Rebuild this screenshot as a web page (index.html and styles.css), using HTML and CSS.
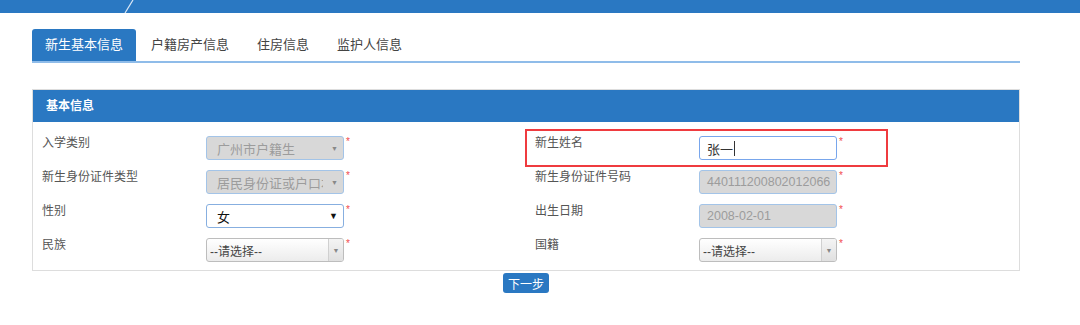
FILE: index.html
```html
<!DOCTYPE html>
<html lang="zh-CN">
<head>
  <meta charset="UTF-8">
  <title>新生信息登记</title>
  <link rel="stylesheet" href="styles.css">
</head>
<body>
  <!-- barra superiore -->
  <div class="topbar">
    <svg class="slash" width="10" height="13" viewBox="0 0 10 13">
      <line x1="1" y1="13" x2="9" y2="0" stroke="#dbe8f6" stroke-width="1.2"/>
    </svg>
  </div>

  <div class="wrap">
    <div class="tabs">
      <div class="tab active">新生基本信息</div>
      <div class="tab">户籍房产信息</div>
      <div class="tab">住房信息</div>
      <div class="tab">监护人信息</div>
    </div>

    <div class="panel">
      <div class="panel-head">基本信息</div>
      <div class="panel-body">
        <div class="row">
          <span class="label">入学类别</span>
          <div class="ctrl sel-disabled"><span class="val">广州市户籍生</span><span class="arrow">▼</span></div>
          <span class="req">*</span>
        </div>
        <div class="row">
          <span class="label">新生姓名</span>
          <div class="ctrl field focus">张一<span class="caret"></span></div>
          <span class="req">*</span>
          <div class="mark"></div>
        </div>

        <div class="row">
          <span class="label">新生身份证件类型</span>
          <div class="ctrl sel-disabled"><span class="val">居民身份证或户口本</span><span class="arrow">▼</span></div>
          <span class="req">*</span>
        </div>
        <div class="row">
          <span class="label">新生身份证件号码</span>
          <div class="ctrl field disabled">440111200802012066</div>
          <span class="req">*</span>
        </div>

        <div class="row">
          <span class="label">性别</span>
          <div class="ctrl sel-native"><span class="val">女</span><span class="arrow">▼</span></div>
          <span class="req">*</span>
        </div>
        <div class="row">
          <span class="label">出生日期</span>
          <div class="ctrl field disabled">2008-02-01</div>
          <span class="req">*</span>
        </div>

        <div class="row">
          <span class="label">民族</span>
          <div class="ctrl sel-chosen"><span class="val">--请选择--</span><span class="drop"><span class="arrow">▼</span></span></div>
          <span class="req">*</span>
        </div>
        <div class="row">
          <span class="label">国籍</span>
          <div class="ctrl sel-chosen"><span class="val">--请选择--</span><span class="drop"><span class="arrow">▼</span></span></div>
          <span class="req">*</span>
        </div>
      </div>
    </div>

    <button class="next">下一步</button>
  </div>
</body>
</html>
```

FILE: styles.css
```css
body {
  margin: 0;
  font-family: "Liberation Sans", "Noto Sans CJK SC", sans-serif;
  background-color: #ffffff;
  color: #555555;
}

.topbar {
  height: 13px;
  background-color: #2a78c2;
  display: flex;
}

.slash {
  margin-left: 124px;
}

.wrap {
  width: 988px;
  margin: 16px 0 0 32px;
  display: flex;
  flex-direction: column;
}

/* schede */
.tabs {
  display: flex;
  border-bottom: 2px solid #8fbce9;
}

.tab {
  padding: 0 13px;
  margin-right: 2px;
  line-height: 32px;
  font-size: 13px;
  color: #444444;
}

.tab.active {
  background-color: #2a78c2;
  color: #ffffff;
  border-radius: 3px 3px 0 0;
}

/* pannello */
.panel {
  margin-top: 26px;
  border: 1px solid #dddddd;
}

.panel-head {
  height: 32px;
  line-height: 32px;
  padding-left: 13px;
  background-color: #2a78c2;
  color: #ffffff;
  font-size: 12px;
  font-weight: bold;
}

.panel-body {
  display: grid;
  grid-template-columns: 1fr 1fr;
  padding: 8px 0 4px;
}

.row {
  position: relative;
  display: flex;
  height: 34px;
  padding-left: 9px;
}

.label {
  width: 164px;
  padding-top: 5px;
  line-height: 16px;
  font-size: 12px;
  color: #555555;
}

.ctrl {
  box-sizing: border-box;
  width: 138px;
  height: 24px;
  margin-top: 6px;
  border-radius: 3px;
  display: flex;
  align-items: center;
  font-size: 12.5px;
  overflow: hidden;
  white-space: nowrap;
}

.ctrl .val {
  flex: 1;
  min-width: 0;
  overflow: hidden;
  text-overflow: clip;
}

.arrow {
  font-size: 7px;
  color: #888888;
}

.req {
  margin: 7px 0 0 2px;
  font-size: 10px;
  line-height: 10px;
  color: #f24b4b;
}

.sel-disabled {
  background-color: #d8d8d8;
  border: 1px solid #a3c4e8;
  color: #9c9c9c;
  padding: 0 5px 0 10px;
  font-size: 13px;
}

.sel-disabled .val {
  margin-right: 8px;
}

.sel-native {
  background-color: #ffffff;
  border: 1px solid #87afe0;
  color: #111111;
  padding: 0 5px 0 10px;
  font-size: 13px;
}

.sel-native .arrow {
  color: #111111;
  font-size: 9px;
}

.sel-chosen {
  background: linear-gradient(#ffffff, #ececec);
  border: 1px solid #bdbdbd;
  color: #444444;
  padding-left: 3px;
  font-size: 12px;
}

.drop {
  width: 14px;
  height: 100%;
  border-left: 1px solid #d0d0d0;
  background: linear-gradient(#f4f4f4, #e0e0e0);
  display: flex;
  align-items: center;
  justify-content: center;
}

.field {
  padding-left: 7px;
}

.field.disabled {
  background-color: #d8d8d8;
  border: 1px solid #a3c4e8;
  color: #9c9c9c;
}

.field.focus {
  background-color: #ffffff;
  border: 1px solid #78a6ec;
  color: #333333;
  font-size: 13px;
}

.caret {
  width: 1px;
  height: 15px;
  margin-left: 1px;
  background-color: #333333;
}

/* riquadro rosso di evidenziazione */
.mark {
  position: absolute;
  left: -1px;
  top: -1px;
  width: 359px;
  height: 34px;
  border: 2px solid #ef3b3f;
}

.next {
  align-self: center;
  margin-top: 2px;
  width: 46px;
  height: 20px;
  padding: 0;
  border: none;
  border-radius: 3px;
  background-color: #2a78c2;
  color: #ffffff;
  font-family: inherit;
  font-size: 12px;
}
```
